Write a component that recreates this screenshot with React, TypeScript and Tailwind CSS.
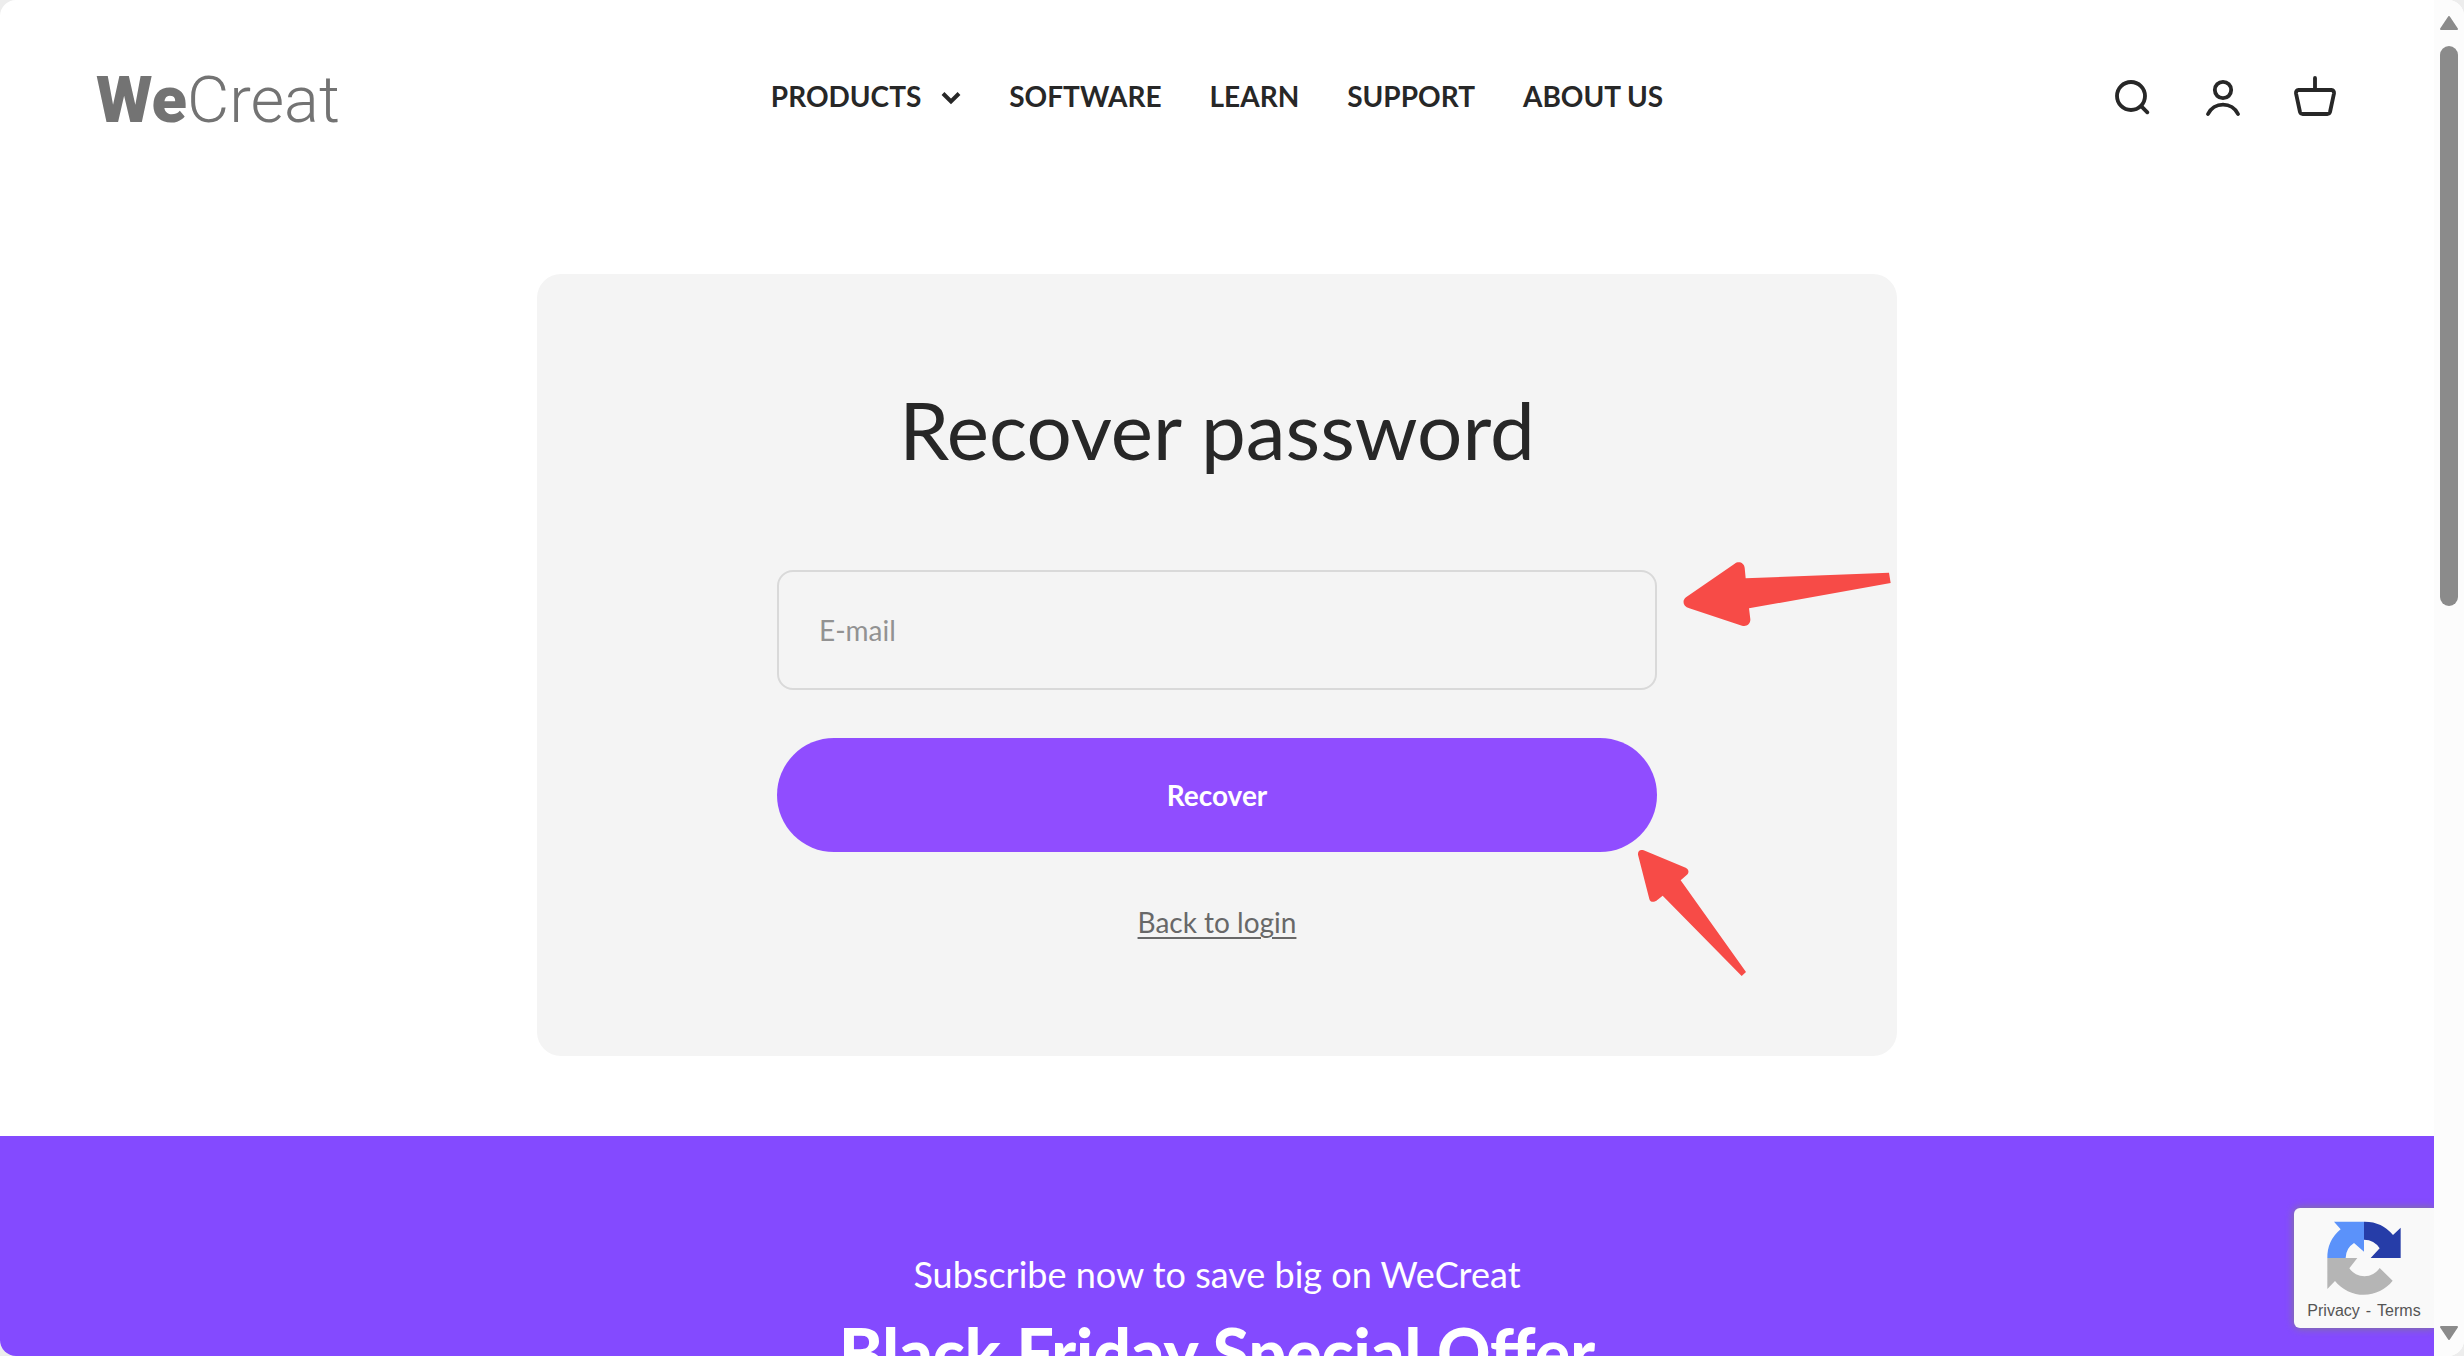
const links = ['SOFTWARE', 'LEARN', 'SUPPORT', 'ABOUT US']

function Logo() {
  return (
    <a href="#" aria-label="WeCreat" className="flex items-baseline pt-2 font-['Roboto',sans-serif] text-[65px] leading-none text-[#737373]">
      <span className="font-black">We</span>
      <span className="font-light">Creat</span>
    </a>
  )
}

function Header() {
  return (
    <header className="grid grid-cols-[1fr_auto_1fr] items-center h-48 px-24">
      <Logo />
      <nav className="flex items-center gap-12 text-[28px] font-bold leading-9">
        <button type="button" className="flex items-center gap-5 cursor-pointer">
          PRODUCTS
          <svg viewBox="0 0 20 14" className="w-5 h-[14px] mt-1" fill="none" stroke="currentColor" strokeWidth="4">
            <path d="M2 2.5l8 8 8-8" />
          </svg>
        </button>
        {links.map((label) => (
          <a key={label} href="#">{label}</a>
        ))}
      </nav>
      <div className="flex items-center justify-end gap-[46px]">
        <button type="button" aria-label="Search">
          <svg viewBox="57 72 138 126" className="w-[46px] h-[42px]" fill="none" stroke="currentColor" strokeWidth="11.5" strokeLinecap="round">
            <circle cx="126" cy="135" r="42" />
            <path d="M158 167l17 17" />
          </svg>
        </button>
        <a href="#" aria-label="Account">
          <svg viewBox="333 72 138 126" className="w-[46px] h-[42px]" fill="none" stroke="currentColor" strokeWidth="11.5" strokeLinecap="round">
            <circle cx="402" cy="117" r="24.5" />
            <path d="M357 189a50 50 0 0 1 90 0" />
          </svg>
        </a>
        <a href="#" aria-label="Cart">
          <svg viewBox="609 72 138 126" className="w-[46px] h-[42px]" fill="none" stroke="currentColor" strokeWidth="11.5" strokeLinecap="round" strokeLinejoin="round">
            <path d="M678 81v34M629 117h98q9 1 8 10l-12 56q-2 6-8 6h-74q-6 0-8-6l-12-56q-1-9 8-10z" />
          </svg>
        </a>
      </div>
    </header>
  )
}

function Arrows() {
  return (
    <>
      <svg viewBox="250 60 630 201" className="absolute top-[286px] right-1 w-[210px] h-[67px]" fill="#f74b47">
        <path d="M259 172L405 71C416 62 433 67 435 83L438 115L868 98L873 129L448 205L452 238C453 253 440 261 427 257L269 205C249 199 247 181 259 172Z" />
      </svg>
      <svg viewBox="111 927 330 384" className="absolute top-[575px] right-[150px] w-[110px] h-32" fill="#f74b47">
        <path d="M131 931L257 983C267 988 268 998 261 1004L242 1021L438 1296L425 1308L188 1067L171 1081C163 1088 150 1087 148 1077L114 944C113 934 120 927 131 931Z" />
      </svg>
    </>
  )
}

function RecoverCard() {
  return (
    <section className="relative w-full max-w-[1360px] mx-auto rounded-3xl bg-[#f4f4f4] pt-[107px] pb-[116px]">
      <h1 className="text-center text-[80px] leading-[96px]">Recover password</h1>
      <form className="flex flex-col items-center w-[880px] mx-auto mt-[93px]" onSubmit={(e) => e.preventDefault()}>
        <input
          type="email"
          aria-label="E-mail"
          placeholder="E-mail"
          className="w-full h-[120px] px-10 rounded-2xl border-2 border-[#d9d9d9] bg-transparent text-[28px] placeholder:text-[#929292]"
        />
        <button type="submit" className="w-full h-[114px] mt-12 rounded-full bg-[#904dff] text-[28px] font-bold text-white">
          Recover
        </button>
        <a href="#" className="mt-[52px] text-[28px] leading-9 text-[#686868] underline underline-offset-4 decoration-2">
          Back to login
        </a>
      </form>
      <Arrows />
    </section>
  )
}

function Newsletter() {
  return (
    <section className="mt-20 pt-[111px] pb-28 bg-[#844aff] text-center text-white">
      <p className="text-[36px] leading-[54px]">Subscribe now to save big on WeCreat</p>
      <h2 className="mt-3 text-[66px] leading-[78px] font-black">Black Friday Special Offer</h2>
    </section>
  )
}

function RecaptchaBadge() {
  return (
    <div className="absolute right-0 bottom-7 flex flex-col items-center w-[140px] h-[120px] pt-3 rounded-l-md bg-[#f9f9f9] shadow-[0_0_8px_gray]">
      <svg viewBox="186 120 228 231" className="w-[76px] h-[77px]">
        <path fill="#5b92fa" d="M190 234A110 110 0 0 1 230 148L210 125H300V215L270 189A54 54 0 0 0 245 234Z" />
        <path fill="#263da8" d="M300 125A110 110 0 0 1 387 165L410 143V234H320L347 205A55 55 0 0 0 300 179Z" />
        <path fill="#b5b5b5" d="M190 234H280L256 265A55 55 0 0 0 347 264L386 302A110 110 0 0 1 213 303L190 327Z" />
      </svg>
      <div className="flex gap-1.5 mt-1 font-['Liberation_Sans',sans-serif] text-base leading-5 text-[#555]">
        <a href="#">Privacy</a>
        <span>-</span>
        <a href="#">Terms</a>
      </div>
    </div>
  )
}

function Scrollbar() {
  return (
    <div className="flex flex-col items-center w-[30px] shrink-0 bg-[#fcfcfc] text-[#8b8b8b]">
      <svg viewBox="0 0 18 14" className="w-[18px] h-[14px] mt-4" fill="currentColor" stroke="currentColor" strokeWidth="2" strokeLinejoin="round">
        <path d="M9 1l8 12H1z" />
      </svg>
      <div className="w-[18px] h-[560px] mt-4 rounded-full bg-[#8b8b8b]" />
      <svg viewBox="0 0 18 14" className="w-[18px] h-[14px] mt-auto mb-4" fill="currentColor" stroke="currentColor" strokeWidth="2" strokeLinejoin="round">
        <path d="M9 13L1 1h16z" />
      </svg>
    </div>
  )
}

export default function App() {
  return (
    <div className="h-screen bg-[#ededed]">
      <div className="flex h-full overflow-hidden rounded-2xl bg-white font-['Lato',sans-serif] text-[#272727]">
        <div className="relative flex-1 overflow-hidden">
          <Header />
          <main className="pt-[82px]">
            <RecoverCard />
          </main>
          <Newsletter />
          <RecaptchaBadge />
        </div>
        <Scrollbar />
      </div>
    </div>
  )
}
